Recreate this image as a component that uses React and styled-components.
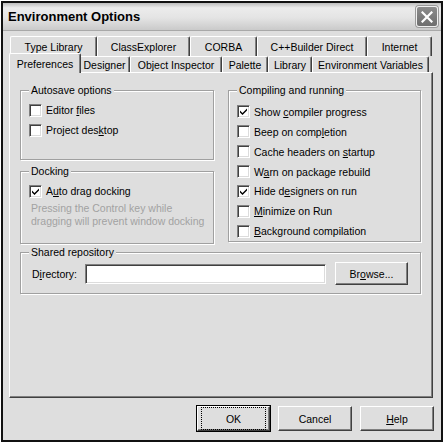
import React from 'react';
import styled, { createGlobalStyle } from 'styled-components';

const Global = createGlobalStyle`
  html, body { margin: 0; padding: 0; background: #fff; }
  body { font-family: "Liberation Sans", Arial, sans-serif; font-size: 10.5px; color: #000; }
`;

const FACE = '#dedede';

const Window = styled.div`
  box-sizing: border-box;
  margin: 1px 0 0 1px;
  width: 442px;
  height: 441px;
  border: 2px solid #111;
  background: ${FACE};
  display: flex;
  flex-direction: column;
`;

const TitleBar = styled.div`
  box-sizing: border-box;
  height: 28px;
  display: flex;
  align-items: center;
  justify-content: space-between;
  padding: 0 3px 0 5px;
  background: linear-gradient(#bdbdbd 0%, #ececec 18%, #e4e4e4 55%, #cacaca 100%);
  border-bottom: 1px solid #a8a8a8;
`;

const Title = styled.span`
  font-family: "Liberation Sans", Arial, sans-serif;
  font-weight: bold;
  font-size: 13px;
  color: #000;
`;

const CloseBtn = styled.div`
  box-sizing: border-box;
  width: 22px;
  height: 21px;
  border-radius: 3px;
  border: 1px solid #f0f0f0;
  background: linear-gradient(#8c8c8c, #6e6e6e);
  box-shadow: 0 0 0 1px #9a9a9a;
  display: flex;
  align-items: center;
  justify-content: center;
`;

const Body = styled.div`
  flex: 1;
  display: flex;
  flex-direction: column;
  padding: 5px 8px 0 6px;
`;

const TabStrip = styled.div`
  display: flex;
  flex-direction: column;
  padding-left: 1px;
`;

const TabRow = styled.div`
  display: flex;
  height: ${p => p.$h}px;
  align-items: flex-end;
  position: relative;
  z-index: ${p => p.$z};
`;

const Tab = styled.div`
  box-sizing: border-box;
  width: ${p => p.$w}px;
  height: ${p => p.$active ? p.$h + 4 : p.$h}px;
  margin: ${p => p.$active ? '0 -2px -1px -1px' : '0'};
  position: relative;
  z-index: ${p => p.$active ? 3 : 1};
  background: ${FACE};
  border-top: 1px solid #fff;
  border-left: 1px solid #fff;
  border-right: 1px solid #404040;
  border-radius: 2px 2px 0 0;
  box-shadow: inset -1px 0 0 #808080;
  text-align: center;
  padding-top: ${p => p.$pt}px;
  line-height: 12px;
  white-space: nowrap;
`;

const Panel = styled.div`
  box-sizing: border-box;
  width: 424px;
  height: 326px;
  border-top: 1px solid #fff;
  border-left: 1px solid #fff;
  border-right: 1px solid #404040;
  border-bottom: 1px solid #404040;
  box-shadow: inset -1px -1px 0 #808080;
  padding: 17px 0 0 10px;
  position: relative;
  z-index: 2;
  display: flex;
  flex-direction: column;
`;

const Columns = styled.div`
  display: flex;
  gap: 14px;
  align-items: flex-start;
`;

const Column = styled.div`
  display: flex;
  flex-direction: column;
  gap: 11px;
`;

const Group = styled.div`
  box-sizing: border-box;
  position: relative;
  width: ${p => p.$w}px;
  height: ${p => p.$h}px;
  border: 1px solid #a0a0a0;
  box-shadow: inset 1px 1px 0 #fff, 1px 1px 0 #fff;
  padding: ${p => p.$pt}px ${p => p.$pr || 8}px 0 8px;
  margin-top: ${p => p.$mt || 0}px;
  display: flex;
  flex-direction: column;
`;

const Legend = styled.span`
  position: absolute;
  top: -7px;
  left: 8px;
  padding: 0 2px;
  background: ${FACE};
  line-height: 12px;
  white-space: nowrap;
`;

const CheckRow = styled.label`
  display: flex;
  align-items: center;
  gap: 4px;
  height: 20px;
  white-space: nowrap;
`;

const Box = styled.span`
  box-sizing: border-box;
  width: 13px;
  height: 13px;
  flex: none;
  background: #fff;
  border-top: 1px solid #808080;
  border-left: 1px solid #808080;
  border-right: 1px solid #fff;
  border-bottom: 1px solid #fff;
  box-shadow: inset 1px 1px 0 #404040, inset -1px -1px 0 #dcdcdc;
  display: flex;
  align-items: center;
  justify-content: center;
`;

const U = styled.span`
  text-decoration: underline;
  text-underline-offset: 1px;
`;

const Hint = styled.div`
  color: #a2a2a2;
  line-height: 13px;
  margin: 1px 0 0 2px;
  white-space: nowrap;
`;

const RepoRow = styled.div`
  display: flex;
  align-items: center;
  height: 23px;
`;

const DirLabel = styled.span`
  width: 53px;
  margin-left: 3px;
  flex: none;
`;

const Edit = styled.div`
  box-sizing: border-box;
  flex: 1;
  height: 20px;
  background: #fff;
  border-top: 1px solid #808080;
  border-left: 1px solid #808080;
  border-right: 1px solid #fff;
  border-bottom: 1px solid #fff;
  box-shadow: inset 1px 1px 0 #404040, inset -1px -1px 0 #dcdcdc;
  margin-right: 9px;
`;

const Button = styled.div`
  box-sizing: border-box;
  width: ${p => p.$w}px;
  height: ${p => p.$h}px;
  flex: none;
  background: ${FACE};
  border-top: 1px solid #fff;
  border-left: 1px solid #fff;
  border-right: 1px solid #404040;
  border-bottom: 1px solid #404040;
  box-shadow: inset -1px -1px 0 #808080;
  display: flex;
  align-items: center;
  justify-content: center;
  ${p => p.$default && `
    outline: 1px solid #000;
    outline-offset: 0px;
  `}
`;

const Focus = styled.span`
  box-sizing: border-box;
  width: 100%;
  height: 100%;
  margin: 3px;
  border: 1px dotted #000;
  display: flex;
  align-items: center;
  justify-content: center;
`;

const ButtonRow = styled.div`
  display: flex;
  justify-content: flex-end;
  gap: 8px;
  margin: 8px -1px 0 0;
`;

const Check = () => (
  <svg width="9" height="9" viewBox="0 0 9 9">
    <path d="M1 3.5 L3.5 6 L8 1.5 L8 3.5 L3.5 8 L1 5.5 Z" fill="#000" />
  </svg>
);

const CheckBox = ({ checked, children }) => (
  <CheckRow>
    <Box>{checked && <Check />}</Box>
    <span>{children}</span>
  </CheckRow>
);

const row1 = [
  ['Type Library', 87], ['ClassExplorer', 93], ['CORBA', 67], ['C++Builder Direct', 110], ['Internet', 65],
];
const row2 = [
  ['Preferences', 72, true], ['Designer', 51], ['Object Inspector', 92], ['Palette', 46], ['Library', 44], ['Environment Variables', 117],
];

export default function App() {
  return (
    <>
      <Global />
      <Window>
        <TitleBar>
          <Title>Environment Options</Title>
          <CloseBtn>
            <svg width="12" height="12" viewBox="0 0 12 12">
              <path d="M1.5 1.5 L10.5 10.5 M10.5 1.5 L1.5 10.5" stroke="#fff" strokeWidth="2.2" strokeLinecap="square" />
            </svg>
          </CloseBtn>
        </TitleBar>
        <Body>
          <TabStrip>
            <TabRow $h={20} $z={1}>
              {row1.map(([t, w]) => (
                <Tab key={t} $w={w} $h={20} $pt={4}>{t}</Tab>
              ))}
            </TabRow>
            <TabRow $h={16} $z={3}>
              {row2.map(([t, w, a]) => (
                <Tab key={t} $w={w} $h={16} $pt={a ? 4 : 2} $active={a}>{t}</Tab>
              ))}
            </TabRow>
          </TabStrip>
          <Panel>
            <Columns>
              <Column>
                <Group $w={194} $h={70} $pt={9}>
                  <Legend>Autosave options</Legend>
                  <CheckBox>Editor <U>f</U>iles</CheckBox>
                  <CheckBox>Project des<U>k</U>top</CheckBox>
                </Group>
                <Group $w={194} $h={73} $pt={9}>
                  <Legend>Docking</Legend>
                  <CheckBox checked>A<U>u</U>to drag docking</CheckBox>
                  <Hint>
                    Pressing the Control key while<br />
                    dragging will prevent window docking
                  </Hint>
                </Group>
              </Column>
              <Group $w={193} $h={152} $pt={11}>
                <Legend>Compiling and running</Legend>
                <CheckBox checked>Show <U>c</U>ompiler progress</CheckBox>
                <CheckBox>Beep on comp<U>l</U>etion</CheckBox>
                <CheckBox>Cache headers on <U>s</U>tartup</CheckBox>
                <CheckBox>W<U>a</U>rn on package rebuild</CheckBox>
                <CheckBox checked>Hide d<U>e</U>signers on run</CheckBox>
                <CheckBox><U>M</U>inimize on Run</CheckBox>
                <CheckBox><U>B</U>ackground compilation</CheckBox>
              </Group>
            </Columns>
            <Group $w={401} $h={42} $pt={9} $mt={8} $pr={12}>
              <Legend>Shared repository</Legend>
              <RepoRow>
                <DirLabel>D<U>i</U>rectory:</DirLabel>
                <Edit />
                <Button $w={73} $h={23}>Br<U>o</U>wse...</Button>
              </RepoRow>
            </Group>
          </Panel>
          <ButtonRow>
            <Button $w={73} $h={25} $default><Focus>OK</Focus></Button>
            <Button $w={74} $h={25}>Cancel</Button>
            <Button $w={74} $h={25}><U>H</U>elp</Button>
          </ButtonRow>
        </Body>
      </Window>
    </>
  );
}
